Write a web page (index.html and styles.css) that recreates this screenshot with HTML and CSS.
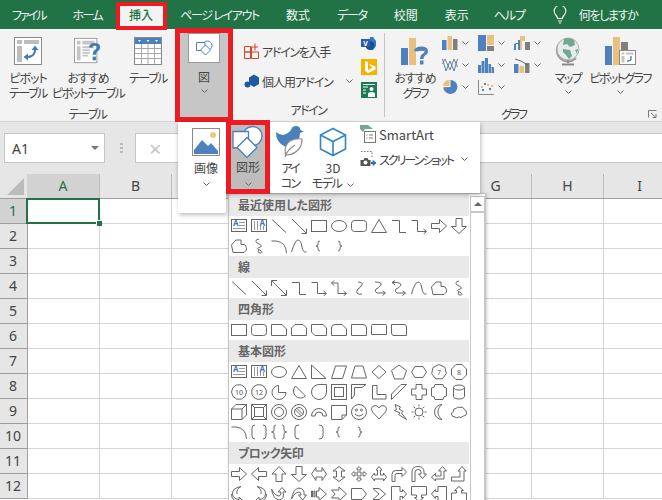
FILE: index.html
```html
<!DOCTYPE html>
<html lang="ja">
<head>
<meta charset="utf-8">
<title>Excel 挿入 図形</title>
<link rel="stylesheet" href="styles.css">
</head>
<body>
<svg class="defs" aria-hidden="true">
<defs>
<symbol id="chev" viewBox="0 0 7 4"><path d="M.5 .5L3.500 3.500 6.500 .5" fill="none" stroke="#666"/></symbol>
<symbol id="tb" viewBox="0 0 16 16"><rect x=".5" y="1.500" width="15" height="12"/><text x="2" y="8" class="ta">A</text><path d="M8 4.500h6M8 7.500h6M2 10.500h12" stroke="#999"/></symbol>
<symbol id="vt" viewBox="0 0 16 16"><rect x=".5" y="1.500" width="15" height="12"/><path d="M3.500 3v9M6.500 3v9M9.500 8v4M12.500 8v4" stroke="#999"/><text x="8.500" y="8" class="ta">A</text></symbol>
<symbol id="ln" viewBox="0 0 16 16"><path d="M1 1.500L15 14.500"/></symbol>
<symbol id="ar" viewBox="0 0 16 16"><path d="M1 1L15 15M10.500 15.500H15.500V10.500"/></symbol>
<symbol id="r" viewBox="0 0 16 16"><rect x=".5" y="2.500" width="15" height="11"/></symbol>
<symbol id="ov" viewBox="0 0 16 16"><ellipse cx="8" cy="8" rx="7.500" ry="5.500"/></symbol>
<symbol id="rr" viewBox="0 0 16 16"><rect x=".5" y="2.500" width="15" height="11" rx="3"/></symbol>
<symbol id="tri" viewBox="0 0 16 16"><path d="M8 1.500L15.500 14.500H.5z"/></symbol>
<symbol id="el" viewBox="0 0 16 16"><path d="M1 2.500H8.500V14.500H15"/></symbol>
<symbol id="ea" viewBox="0 0 16 16"><path d="M.5 2.500H6.500V13.500H15M12.500 11l3 2.500-3 2.500"/></symbol>
<symbol id="bra" viewBox="0 0 16 16"><path d="M.5 5.500H8.500V1.500L15.500 8 8.500 14.500V10.500H.5z"/></symbol>
<symbol id="bla" viewBox="0 0 16 16"><path d="M15.500 5.500H7.500V1.500L.5 8 7.500 14.500V10.500H15.500z"/></symbol>
<symbol id="bua" viewBox="0 0 16 16"><path d="M8 .5L15 8H11V15.500H5V8H1z"/></symbol>
<symbol id="bda" viewBox="0 0 16 16"><path d="M5 .5H11V8.500H15.500L8 15.500 .5 8.500H5z"/></symbol>
<symbol id="ff" viewBox="0 0 16 16"><path d="M2 14.500L.5 7 5 2H10V6.500H13Q15.500 7 15.500 12L13 14.500z"/></symbol>
<symbol id="sc" viewBox="0 0 16 16"><path d="M8 1Q3 2 6 5Q13 8 9 9Q4 11 9 12Q13 15 9 15Q6 15 8 12"/></symbol>
<symbol id="cv" viewBox="0 0 16 16"><path d="M.5 3H5Q15 4 15.500 15"/></symbol>
<symbol id="cs" viewBox="0 0 16 16"><path d="M.5 14Q4 2 7 2Q10 2 11 9Q12 15 15.500 14"/></symbol>
<symbol id="lb" viewBox="0 0 16 16"><path d="M9 3Q7 3 7 5V7Q7 8 5 8Q7 8 7 10V11Q7 13 9 13"/></symbol>
<symbol id="rb" viewBox="0 0 16 16"><path d="M7 3Q9 3 9 5V7Q9 8 11 8Q9 8 9 10V11Q9 13 7 13"/></symbol>
<symbol id="da" viewBox="0 0 16 16"><path d="M1 1L15 15M.5 6V.5H6M10 15.500H15.500V10"/></symbol>
<symbol id="ed" viewBox="0 0 16 16"><path d="M3 .5L.5 3 3 5.500M.5 3H7V13.500H15M12.500 11l3 2.500-3 2.500"/></symbol>
<symbol id="cc" viewBox="0 0 16 16"><path d="M7 2Q12 2 11 5Q9 8 7 9Q5 12 6 13Q8 15 11 14"/></symbol>
<symbol id="ca" viewBox="0 0 16 16"><path d="M4 2Q11 2 10 5Q8 8 5 9Q3 12 6 13H14M11.500 11l3 2-3 2.500"/></symbol>
<symbol id="cd" viewBox="0 0 16 16"><path d="M4 .5L1 2.500 4 5M1 2.500Q10 2 10 5Q8 8 5 9Q3 12 6 13H14M11.500 11l3 2-3 2.500"/></symbol>
<symbol id="s1" viewBox="0 0 16 16"><path d="M.5 2.500H11L15.500 7V13.500H.5z"/></symbol>
<symbol id="s2" viewBox="0 0 16 16"><path d="M4 2.500H12L15.500 6V13.500H.5V6z"/></symbol>
<symbol id="s3" viewBox="0 0 16 16"><path d="M.5 2.500H12L15.500 6V13.500H4L.5 10z"/></symbol>
<symbol id="s4" viewBox="0 0 16 16"><path d="M.5 13.500V6Q.5 2.500 4 2.500H11L15.500 7V13.500z"/></symbol>
<symbol id="r1" viewBox="0 0 16 16"><path d="M.5 2.500H12Q15.500 2.500 15.500 6V13.500H.5z"/></symbol>
<symbol id="r2" viewBox="0 0 16 16"><path d="M.5 12.500V3.500Q.5 2.500 2 2.500H14Q15.500 2.500 15.500 3.500V12.500z"/></symbol>
<symbol id="r3" viewBox="0 0 16 16"><path d="M.5 2.500H13Q15.500 2.500 15.500 5V13.500H3Q.5 13.500 .5 11z"/></symbol>
<symbol id="rt" viewBox="0 0 16 16"><path d="M.5 1V14.500H15z"/></symbol>
<symbol id="pg" viewBox="0 0 16 16"><path d="M.5 14.500L4.500 2H15.500L11.500 14.500z"/></symbol>
<symbol id="tz" viewBox="0 0 16 16"><path d="M4 2H12L15.500 14H.5z"/></symbol>
<symbol id="di" viewBox="0 0 16 16"><path d="M8 1.500L15 8 8 14.500 1 8z"/></symbol>
<symbol id="pe" viewBox="0 0 16 16"><path d="M8 1L15.500 6.500 12.500 15H3.500L.5 6.500z"/></symbol>
<symbol id="hx" viewBox="0 0 16 16"><path d="M4 2.500H12L15.500 8 12 13.500H4L.5 8z"/></symbol>
<symbol id="h7" viewBox="0 0 16 16"><path d="M8 .5L13.900 3.300 15.300 9.700 11.300 14.800H4.700L.7 9.700 2.100 3.300z"/><text x="8" y="11" class="tn">7</text></symbol>
<symbol id="o8" viewBox="0 0 16 16"><path d="M5 .5H11L15.500 5V11L11 15.500H5L.5 11V5z"/><text x="8" y="11" class="tn">8</text></symbol>
<symbol id="d10" viewBox="0 0 16 16"><path d="M5.700 .9H10.300L14.100 3.600 15.500 8 14.100 12.400 10.300 15.100H5.700L1.900 12.400 .5 8 1.900 3.600z"/><text x="8" y="10.500" class="tn">10</text></symbol>
<symbol id="d12" viewBox="0 0 16 16"><path d="M6 .8H10L13.300 2.700 15.200 6V10L13.300 13.300 10 15.200H6L2.700 13.300 .8 10V6L2.700 2.700z"/><text x="8" y="10.500" class="tn">12</text></symbol>
<symbol id="pie" viewBox="0 0 16 16"><path d="M7.500 1.500A7 7 0 1 0 15 8.500H7.500z"/></symbol>
<symbol id="ch" viewBox="0 0 16 16"><path d="M4.500 2L14.500 12A7 7 0 1 1 4.500 2z"/></symbol>
<symbol id="td" viewBox="0 0 16 16"><path d="M15.500 .5V8A7.500 7.500 0 1 1 8 .5z"/></symbol>
<symbol id="fr" viewBox="0 0 16 16"><rect x=".5" y=".5" width="15" height="15"/><rect x="3.500" y="3.500" width="9" height="9"/></symbol>
<symbol id="hf" viewBox="0 0 16 16"><path d="M.5 .5H15L11 3.500H3.500V11L.5 15z"/></symbol>
<symbol id="ls" viewBox="0 0 16 16"><path d="M1.500 1.500H6V10.500H15V15H1.500z"/></symbol>
<symbol id="ds" viewBox="0 0 16 16"><path d="M.5 10L10 .5H15.500L.5 15.500z"/></symbol>
<symbol id="pl" viewBox="0 0 16 16"><path d="M5 .5H11V5H15.500V11H11V15.500H5V11H.5V5H5z"/></symbol>
<symbol id="pq" viewBox="0 0 16 16"><path d="M4 .5H12Q12 4 15.500 4V12Q12 12 12 15.500H4Q4 12 .5 12V4Q4 4 4 .5z"/></symbol>
<symbol id="can" viewBox="0 0 16 16"><path d="M2.500 3.500A5.500 2.500 0 0 1 13.500 3.500V12.500A5.500 2.500 0 0 1 2.500 12.500zM2.500 3.500A5.500 2.500 0 0 0 13.500 3.500"/></symbol>
<symbol id="cu" viewBox="0 0 16 16"><path d="M.5 5L5 .5H15.500V11L11 15.500H.5zM.5 5H11V15.500M11 5L15.500 .5"/></symbol>
<symbol id="bv" viewBox="0 0 16 16"><rect x=".5" y=".5" width="15" height="15"/><rect x="3.500" y="3.500" width="9" height="9"/><path d="M.5 .5l3 3M15.500 .5l-3 3M.5 15.500l3-3M15.500 15.500l-3-3"/></symbol>
<symbol id="dn" viewBox="0 0 16 16"><circle cx="8" cy="8" r="7.500"/><circle cx="8" cy="8" r="4.500"/></symbol>
<symbol id="no" viewBox="0 0 16 16"><circle cx="8" cy="8" r="7.500"/><circle cx="8" cy="8" r="4.500"/><path d="M4 5.500L10.500 12M5.500 4L12 10.500"/></symbol>
<symbol id="ba" viewBox="0 0 16 16"><path d="M.5 12A7.500 7.500 0 0 1 15.500 12H12A4 4 0 0 0 4 12z"/></symbol>
<symbol id="fc" viewBox="0 0 16 16"><path d="M.5 1.500H15.500V11L11 15.500H.5zM15.500 11H11V15.500"/></symbol>
<symbol id="sm" viewBox="0 0 16 16"><circle cx="8" cy="8" r="7.500"/><circle cx="5.500" cy="6" r="1"/><circle cx="10.500" cy="6" r="1"/><path d="M4 10Q8 14 12 10"/></symbol>
<symbol id="ht" viewBox="0 0 16 16"><path d="M8 15L1.500 8Q-1 3.500 3 1.800Q6.500 .8 8 4Q9.500 .8 13 1.800Q17 3.500 14.500 8z"/></symbol>
<symbol id="lt" viewBox="0 0 16 16"><path d="M4 .5L9.500 3 8 5 12 7.500 10.500 9 15.500 15.500 7.500 10.500 9 9 3.500 6.500 5.500 5.500z"/></symbol>
<symbol id="sun" viewBox="0 0 16 16"><circle cx="8" cy="8" r="4"/><path d="M8 .5v2M8 13.500v2M.5 8h2M13.500 8h2M2.700 2.700l1.500 1.500M11.800 11.800l1.500 1.500M2.700 13.300l1.500-1.500M11.800 4.200l1.500-1.500"/></symbol>
<symbol id="mn" viewBox="0 0 16 16"><path d="M11 .5A7.500 7.500 0 1 0 11 15.500A9 9 0 0 1 11 .5z"/></symbol>
<symbol id="cl" viewBox="0 0 16 16"><path d="M4 13Q.5 13 .5 10Q.5 8 2.500 7.500Q2 4 5 4.500Q6.500 2 9 3.500Q12 2 13 5Q15.500 6 15.500 9Q15.500 12 12.500 12Q10 14.500 7.500 13Q5.500 14.500 4 13z"/></symbol>
<symbol id="db" viewBox="0 0 16 16"><path d="M4 1Q1 1 1 4V12Q1 15 4 15M12 1Q15 1 15 4V12Q15 15 12 15"/></symbol>
<symbol id="dbr" viewBox="0 0 16 16"><path d="M5 1Q3 1 3 3V6Q3 8 .5 8Q3 8 3 10V13Q3 15 5 15M11 1Q13 1 13 3V6Q13 8 15.500 8Q13 8 13 10V13Q13 15 11 15"/></symbol>
<symbol id="lk" viewBox="0 0 16 16"><path d="M8 1Q4 1 4 4V12Q4 15 8 15"/></symbol>
<symbol id="rk" viewBox="0 0 16 16"><path d="M8 1Q12 1 12 4V12Q12 15 8 15"/></symbol>
<symbol id="lra" viewBox="0 0 16 16"><path d="M.5 8L5 1.500V5H11V1.500L15.500 8 11 14.500V11H5V14.500z"/></symbol>
<symbol id="uda" viewBox="0 0 16 16"><path d="M8 .5L14 5H10.500V11H14L8 15.500 2 11H5.500V5H2z"/></symbol>
<symbol id="qd" viewBox="0 0 16 16"><path d="M8 .5L10.500 3H9V7H13V5.500L15.500 8 13 10.500V9H9V13H10.500L8 15.500 5.500 13H7V9H3V10.500L.5 8 3 5.500V7H7V3H5.500z"/></symbol>
<symbol id="lru" viewBox="0 0 16 16"><path d="M8 .5L11 4H9.500V9H12.500V7L15.500 11 12.500 15V13H3.500V15L.5 11 3.500 7V9H6.500V4H5z"/></symbol>
<symbol id="bn" viewBox="0 0 16 16"><path d="M1 15.500V8Q1 4.500 5 4.500H11V1.500L15.500 6 11 10.500V7.500H6Q4 7.500 4 9.500V15.500z"/></symbol>
<symbol id="ut" viewBox="0 0 16 16"><path d="M1 15.500V6Q1 .5 7 .5Q13 .5 13 6V8H15.500L11.500 12.500 7.500 8H10V6Q10 3.500 7 3.500Q4 3.500 4 6V15.500z"/></symbol>
<symbol id="lu" viewBox="0 0 16 16"><path d="M.5 11L4.500 7.500V10H10V5H7.500L11.500 .5 15.500 5H13V13H4.500V15z"/></symbol>
<symbol id="bu" viewBox="0 0 16 16"><path d="M.5 11H9V5H7L11 .5 15 5H13V15H.5z"/></symbol>
<symbol id="k1" viewBox="0 0 16 16"><path d="M10 .5Q1 2 1.500 8Q2 13 8 13.500V11L11.500 14.500 8 15.500Q.5 15 .5 8M10 .5Q5 3 6 8"/></symbol>
<symbol id="k2" viewBox="0 0 16 16"><path d="M6 .5Q15 2 14.500 8Q14 13 8 13.500V11L4.500 14.500 8 15.500Q15.500 15 15.500 8M6 .5Q11 3 10 8"/></symbol>
<symbol id="k3" viewBox="0 0 16 16"><path d="M.5 3Q2 13 8 14Q14 13 12 6H15L11 1.500 7 6H10Q10 10 8 10Q4 10 .5 3z"/></symbol>
<symbol id="k4" viewBox="0 0 16 16"><path d="M.5 13Q2 3 8 2Q14 3 13 9H15.500L11.500 14 7.500 9H10Q10 6 8 6Q4 6 .5 13z"/></symbol>
<symbol id="st" viewBox="0 0 16 16"><path d="M.5 5H1.500V11H.5zM3 5H4V11H3zM5.500 5H8V1.500L15.500 8 8 14.500V11H5.500z"/></symbol>
<symbol id="nt" viewBox="0 0 16 16"><path d="M.5 4H8V1L15.500 8 8 15V12H.5L4 8z"/></symbol>
<symbol id="hp" viewBox="0 0 16 16"><path d="M.5 2.500H11L15.500 8 11 13.500H.5z"/></symbol>
<symbol id="cn" viewBox="0 0 16 16"><path d="M2 2.500H8L14.500 8 8 13.500H2L8 8z"/></symbol>
<symbol id="c1" viewBox="0 0 16 16"><path d="M.5 .5H9V5.500H11.500V3.500L15.500 8 11.500 12.500V10.500H9V15.500H.5z"/></symbol>
<symbol id="c2" viewBox="0 0 16 16"><path d="M.5 .5H15.500V9H10.500V11.500H12.500L8 15.500 3.500 11.500H5.500V9H.5z"/></symbol>
<symbol id="c3" viewBox="0 0 16 16"><path d="M15.500 .5H7V5.500H4.500V3.500L.5 8 4.500 12.500V10.500H7V15.500H15.500z"/></symbol>
<symbol id="c4" viewBox="0 0 16 16"><path d="M8 .5L12.500 4.500H10.500V7H15.500V15.500H.5V7H5.500V4.500H3.500z"/></symbol>
</defs>
</svg>

<nav class="tabs">
  <span class="tab tab-first"><span class="k20">ファイル</span></span>
  <span class="tab"><span class="k16">ホーム</span></span>
  <span class="tab tab-on">挿入</span>
  <span class="tab"><span class="k13">ページ レイアウト</span></span>
  <span class="tab">数式</span>
  <span class="tab"><span class="k13">データ</span></span>
  <span class="tab">校閲</span>
  <span class="tab">表示</span>
  <span class="tab tab-help"><span class="k10">ヘルプ</span></span>
  <span class="tab tell">
    <svg class="bulb" viewBox="0 0 14 18"><path d="M4.500 12.500Q4.500 10.500 2.800 9A5.800 5.800 0 1 1 11.200 9Q9.500 10.500 9.500 12.500zM5 15h4M6 17h2" fill="none" stroke="#fff" stroke-width="1.100"/></svg>
    <span class="k13">何をしますか</span>
  </span>
</nav>

<section class="ribbon">
  <div class="group g-table">
    <div class="g-body">
      <div class="big w-pivot">
        <svg class="ic28" viewBox="0 0 28 28"><rect x=".5" y=".5" width="27" height="27" fill="#fff" stroke="#8a8a8a"/><path d="M3 3h5v4H3zM10 3h15v4H10zM3 9h5v16H3z" fill="#bdbdbd"/><path d="M21 11v3Q20 20 13 20" fill="none" stroke="#3f7cb8" stroke-width="2"/><path d="M17.500 13L21 8.500 24.500 13zM14 16.500L9.500 20 14 23.500z" fill="#3f7cb8"/></svg>
        <span class="lb"><span class="k10">ピボット</span><br><span class="k15">テーブル</span></span>
      </div>
      <div class="big w-rec">
        <svg class="ic28" viewBox="0 0 30 28"><rect x=".5" y=".5" width="24" height="26" fill="#fff" stroke="#9a9a9a"/><path d="M3 3h4v4H3zM9 3h13v4H9zM3 9h4v15H3z" fill="#c4c4c4"/><path d="M9 10h12M9 13h8M9 16h8M9 19h6" stroke="#c4c4c4" stroke-width="2"/><path d="M16 10Q17 5.500 22 5.500Q28 5.500 28 10Q28 13 25 14.500Q23.500 15.500 23.500 18H20Q20 14 23 12.500Q24.500 11.500 24.500 10Q24.500 8.500 22 8.500Q20 8.500 19.500 10.500z" fill="#3f7cb8"/><rect x="20" y="20" width="3.500" height="4" fill="#3f7cb8"/></svg>
        <span class="lb"><span class="k10">おすすめ</span><br><span class="k16">ピボットテーブル</span></span>
      </div>
      <div class="big w-tbl">
        <svg class="ic28" viewBox="0 0 28 28"><rect x=".5" y=".5" width="27" height="27" fill="#fff" stroke="#8a8a8a"/><rect x="1" y="1" width="26" height="6" fill="#4a80bc"/><path d="M1 11.500h26M1 16.500h26M1 21.500h26M7.500 7v20M14 7v20M20.500 7v20" stroke="#a8a8a8"/><path d="M4 3h3l-1.500 2zM12.500 3h3L14 5zM21 3h3l-1.500 2z" fill="#fff"/></svg>
        <span class="lb k15">テーブル</span>
      </div>
    </div>
    <div class="g-name k15">テーブル</div>
  </div>

  <div class="pic-btn">
    <span class="pic-box">
      <svg class="ic17" viewBox="0 0 17 16"><circle cx="11.500" cy="5.500" r="4.500" fill="#fff" stroke="#4a80bc"/><path d="M.5 2.500H9V10.500H.5z" fill="#fff" stroke="#4a80bc"/><path d="M9.500 5L14.500 10 9.500 15 4.500 10z" fill="#fff" stroke="#4a80bc"/></svg>
    </span>
    <span class="lb pic-lb">図</span>
    <svg class="chev"><use href="#chev"/></svg>
  </div>

  <div class="group g-add">
    <div class="g-body add-body">
      <div class="add-list">
        <div class="add-row">
          <svg class="ic16" viewBox="0 0 16 16"><path d="M.5 3.500h6v5.500h-6zM.5 9h6v6.500h-6zM7.500 9h7v6.500h-7zM7.500 3.500v5.500M11 .5v7M8 4h6" fill="none" stroke="#d24726"/></svg>
          <span class="k13">アドインを入手</span>
        </div>
        <div class="add-row add-row2">
          <svg class="ic16" viewBox="0 0 16 16"><path d="M5 4.500L10 1.500 15 4.500V11L10 14 5 11z" fill="#1e5aa0"/><circle cx="3.500" cy="11.500" r="3" fill="#1e5aa0"/></svg>
          <span class="k10">個人用アドイン</span>
          <svg class="chev add-chev"><use href="#chev"/></svg>
        </div>
      </div>
      <div class="add-icons">
        <svg class="ic16" viewBox="0 0 16 16"><path d="M9 1h3l3 4v5l-3 4H9z" fill="#2b7cd3"/><path d="M9 14a4.500 4.500 0 1 1 0-9 4.500 4.500 0 0 1 0 9z" fill="#1b4f94"/><rect x="0" y="3" width="9" height="8" fill="#2a5ca8"/><text x="4.500" y="9.500" class="tv">V</text></svg>
        <svg class="ic16" viewBox="0 0 16 16"><rect width="16" height="16" fill="#f7b200"/><path d="M4 2l3 1v8l5-2.500-2.500-1.200-1-2.300 6 2.500v3L7 14l-3-2z" fill="#fff"/></svg>
        <svg class="ic16" viewBox="0 0 16 16"><rect width="16" height="16" fill="#1d7a56"/><path d="M2 2.500h12M2 5h5M2 8h3M2 11h3" stroke="#fff"/><circle cx="10.500" cy="7" r="2" fill="#fff"/><path d="M7 15v-3q0-2 3.500-2t3.500 2v3z" fill="#fff"/></svg>
      </div>
    </div>
    <div class="g-name k15">アドイン</div>
  </div>

  <div class="group g-chart">
    <div class="g-body chart-body">
      <div class="big w-recg">
        <svg class="ic28" viewBox="0 0 28 28"><rect x="0" y="11" width="7" height="17" fill="#4e81bd"/><rect x="8" y="1" width="7" height="27" fill="#e9c17f"/><rect x="16" y="11" width="7" height="3" fill="#7f7f7f"/><path d="M13 14Q14 9.500 20 9.500Q27 9.500 27 14Q27 17 24 18.500Q22.500 19.500 22.500 22H19Q19 18 22 16.500Q23.500 15.500 23.500 14Q23.500 12.500 20 12.500Q17.500 12.500 17 14.500z" fill="#4e81bd"/><rect x="19" y="23.500" width="3.500" height="4" fill="#4e81bd"/></svg>
        <span class="lb"><span class="k10">おすすめ</span><br><span class="k23">グラフ</span></span>
      </div>
      <div class="mini-grid">
        <span class="mini"><svg class="ic16" viewBox="0 0 16 16"><path d="M0 5h4.500v10H0z" fill="#4e81bd"/><path d="M5.500 1H10v14H5.500z" fill="#e9c17f"/><path d="M11 4h4.500v11H11z" fill="#7f7f7f"/></svg><svg class="chev"><use href="#chev"/></svg></span>
        <span class="mini"><svg class="ic16" viewBox="0 0 16 16"><path d="M0 0h8v16H0z" fill="#4e81bd"/><path d="M9 0h7v10H9z" fill="#e9c17f"/><path d="M9 11h7v5H9z" fill="#7f7f7f"/></svg><svg class="chev"><use href="#chev"/></svg></span>
        <span class="mini"><svg class="ic16" viewBox="0 0 16 16"><path d="M0 9h2v6H0zM0 9h4V5h2v10H4V8H2" fill="#4e81bd"/><path d="M6 1h5v5H8v9H6z" fill="#e9c17f"/><path d="M11 7h5v8h-5z" fill="#7f7f7f"/></svg><svg class="chev"><use href="#chev"/></svg></span>
        <span class="mini"><svg class="ic16" viewBox="0 0 16 16"><path d="M.5 2L4 14 8 4l4 10 3.500-12" fill="none" stroke="#4e81bd"/><path d="M.5 7L3 2l5 11 4-11 3.500 8" fill="none" stroke="#7f7f7f"/></svg><svg class="chev"><use href="#chev"/></svg></span>
        <span class="mini"><svg class="ic16" viewBox="0 0 16 16"><path d="M0 8h3v8H0zM3.500 4h3v12h-3zM7 1h3v15H7zM10.500 7h2.500v9h-2.500zM13.500 10H16v6h-2.500z" fill="#4e81bd"/></svg><svg class="chev"><use href="#chev"/></svg></span>
        <span class="mini"><svg class="ic16" viewBox="0 0 16 16"><path d="M0 7h4.500v9H0z" fill="#4e81bd"/><path d="M5.500 9H10v7H5.500z" fill="#e9c17f"/><path d="M11 6h4.500v10H11z" fill="#7f7f7f"/><path d="M1 2l6 2 7 4" fill="none" stroke="#666"/></svg><svg class="chev"><use href="#chev"/></svg></span>
        <span class="mini"><svg class="ic16" viewBox="0 0 16 16"><path d="M8.500 1a7 7 0 1 1-7 7.500l7-.5z" fill="#4e81bd"/><path d="M7.500 .8A7 7 0 0 0 1 7h6.500z" fill="#e9c17f"/><path d="M1.300 8.500H7l-4 4q-1.500-2-1.700-4z" fill="#7f7f7f"/></svg><svg class="chev"><use href="#chev"/></svg></span>
        <span class="mini"><svg class="ic16" viewBox="0 0 16 16"><path d="M.5 1v14.500H16" fill="none" stroke="#8a8a8a"/><path d="M3 7h2v2H3zM9 5h2v2H9zM13 6h2v2h-2z" fill="#e9c17f"/><path d="M6 4h2v2H6zM4 10h2v2H4zM11 9h2v2h-2z" fill="#4e81bd"/></svg><svg class="chev"><use href="#chev"/></svg></span>
      </div>
      <div class="big w-map">
        <svg class="ic-globe" viewBox="0 0 26 30"><path d="M21 22A11 11 0 0 1 5 6.500" fill="none" stroke="#9c9c9c" stroke-width="2"/><circle cx="13" cy="13" r="11" fill="#e6ecec" stroke="#b0b0b0"/><path d="M9 3q6-2 10 1l1 5-5 2-3-3-4 1zM8 13l7 1 2 6-3 3-3-4-3-3zM20 14l3-1-1 5z" fill="#6fa98f"/><path d="M13 24v3M7 28.500h12" stroke="#8a8a8a" stroke-width="2"/></svg>
        <span class="lb k16">マップ</span>
        <svg class="chev big-chev"><use href="#chev"/></svg>
      </div>
      <div class="big w-pch">
        <svg class="ic-pch" viewBox="0 0 31 28"><rect x="0" y="9" width="7" height="19" fill="#4e81bd"/><rect x="8" y="0" width="7" height="28" fill="#e9c17f"/><rect x="16" y="5" width="7" height="8" fill="#7f7f7f"/><rect x="14.500" y="13.500" width="16" height="14" fill="#fff" stroke="#8a8a8a"/><path d="M16.500 15.500h3v2h-3zM21 15.500h7.500v2H21zM16.500 19h3v6.500h-3z" fill="#c4c4c4"/><path d="M26 19v3q0 2-4 2" fill="none" stroke="#3f7cb8" stroke-width="1.300"/></svg>
        <span class="lb k16">ピボットグラフ</span>
        <svg class="chev big-chev"><use href="#chev"/></svg>
      </div>
    </div>
    <div class="g-name g-name-chart k23">グラフ</div>
    <svg class="launcher" viewBox="0 0 9 8"><path d="M.5 7.500V.5h8M3 3l4.500 4M4.500 7.500h3.500V4" fill="none" stroke="#777"/></svg>
  </div>
</section>

<div class="fbar">
  <div class="namebox"><span>A1</span><i class="tri-down"></i></div>
  <span class="dots"></span>
  <div class="formula"><span class="cancel">×</span></div>
</div>

<main class="sheet">
  <div class="head">
    <div class="corner"><i></i></div>
    <div class="col col-on">A</div><div class="col">B</div><div class="col">C</div><div class="col">D</div><div class="col">E</div><div class="col">F</div><div class="col">G</div><div class="col">H</div><div class="col">I</div>
  </div>
  <div class="body">
    <div class="rows">
      <div class="row row-on">1</div><div class="row">2</div><div class="row">3</div><div class="row">4</div><div class="row">5</div><div class="row">6</div><div class="row">7</div><div class="row">8</div><div class="row">9</div><div class="row">10</div><div class="row">11</div><div class="row">12</div>
    </div>
    <div class="cells"><div class="sel"><i></i></div></div>
  </div>
</main>

<div class="popup">
  <div class="pop-img">
    <svg class="ic-img" viewBox="0 0 28 28"><rect x=".5" y=".5" width="27" height="27" fill="#fff" stroke="#8a8a8a"/><circle cx="21" cy="7" r="3" fill="#f0c77f"/><path d="M2 26V22L10 12l6 6 3-3 7 8v3z" fill="#4e81bd"/></svg>
    <span class="lb">画像</span>
    <svg class="chev"><use href="#chev"/></svg>
  </div>
  <div class="pop-shape">
    <svg class="ic-shape" viewBox="0 0 32 33"><circle cx="20.500" cy="11" r="9.500" fill="#fff" stroke="#4a80bc" stroke-width="1.300"/><path d="M1 6.500H16.500V23H1z" fill="#fff" stroke="#4a80bc" stroke-width="1.300"/><path d="M15 12.500L25 22.500 15 32.500 5 22.500z" fill="#fff" stroke="#4a80bc" stroke-width="1.300"/></svg>
    <span class="lb">図形</span>
    <svg class="chev"><use href="#chev"/></svg>
  </div>
  <div class="pop-icon">
    <svg class="ic-bird" viewBox="0 0 28 31"><path d="M0 6Q4 9 7 9Q12 8 15 4Q16 0 20 0Q24 0 24.500 4L28 5.500 24 7Q24 15 17 18Q13 23 8 20Q0 16 0 6z" fill="#4a80bc"/><path d="M10 29Q7 20 14 15Q20 12 26 13Q26 20 22 24Q17 29 10 29zM9 31Q11 24 19 19" fill="#fff" stroke="#8a8a8a" stroke-width="1.200"/></svg>
    <span class="lb k20">アイ<br>コン</span>
  </div>
  <div class="pop-3d">
    <svg class="ic-cube" viewBox="0 0 28 30"><path d="M14 1.500L26.500 8V22L14 28.500 1.500 22V8zM1.500 8L14 14.500 26.500 8M14 14.500V28.500" fill="none" stroke="#2e86c8" stroke-width="1.600"/></svg>
    <span class="lb lb-3d">3D<br><span class="k13">モデル</span> <svg class="chev"><use href="#chev"/></svg></span>
  </div>
  <div class="pop-side">
    <div class="side-row">
      <svg class="ic-sa" viewBox="0 0 16 18"><path d="M0 0h8l5 4H5l-2 3L0 4z" fill="#6fa98f"/><rect x="4.500" y="6.500" width="11" height="11" fill="#fff" stroke="#777"/><path d="M6.500 10h1M9 10h4M6.500 13h1M9 13h4" stroke="#777"/></svg>
      <span class="sa">SmartArt</span>
    </div>
    <div class="side-row side-row2">
      <svg class="ic-sa" viewBox="0 0 16 16"><path d="M1 .5h11v6" fill="none" stroke="#777" stroke-dasharray="1.500 1.500"/><path d="M.5 9h3l1-2h3l1 2h2v6h-10z" fill="#555"/><circle cx="5.500" cy="11.500" r="2" fill="#fff"/><path d="M11 12h5M13.500 9.500v5" stroke="#2e6fb5" stroke-width="2"/></svg>
      <span class="k20">スクリーンショット</span>
      <svg class="chev side-chev"><use href="#chev"/></svg>
    </div>
  </div>
</div>

<div class="gallery">
  <div class="list">
    <h4>最近使用した図形</h4>
    <div class="shapes">
      <svg><use href="#tb"/></svg><svg><use href="#vt"/></svg><svg><use href="#ln"/></svg><svg><use href="#ar"/></svg><svg><use href="#r"/></svg><svg><use href="#ov"/></svg><svg><use href="#rr"/></svg><svg><use href="#tri"/></svg><svg><use href="#el"/></svg><svg><use href="#ea"/></svg><svg><use href="#bra"/></svg><svg><use href="#bda"/></svg>
      <svg><use href="#ff"/></svg><svg><use href="#sc"/></svg><svg><use href="#cv"/></svg><svg><use href="#cs"/></svg><svg><use href="#lb"/></svg><svg><use href="#rb"/></svg>
    </div>
    <h4>線</h4>
    <div class="shapes">
      <svg><use href="#ln"/></svg><svg><use href="#ar"/></svg><svg><use href="#da"/></svg><svg><use href="#el"/></svg><svg><use href="#ea"/></svg><svg><use href="#ed"/></svg><svg><use href="#cc"/></svg><svg><use href="#ca"/></svg><svg><use href="#cd"/></svg><svg><use href="#cs"/></svg><svg><use href="#ff"/></svg><svg><use href="#sc"/></svg>
    </div>
    <h4>四角形</h4>
    <div class="shapes">
      <svg><use href="#r"/></svg><svg><use href="#rr"/></svg><svg><use href="#s1"/></svg><svg><use href="#s2"/></svg><svg><use href="#s3"/></svg><svg><use href="#s4"/></svg><svg><use href="#r1"/></svg><svg><use href="#r2"/></svg><svg><use href="#r3"/></svg>
    </div>
    <h4>基本図形</h4>
    <div class="shapes">
      <svg><use href="#tb"/></svg><svg><use href="#vt"/></svg><svg><use href="#ov"/></svg><svg><use href="#tri"/></svg><svg><use href="#rt"/></svg><svg><use href="#pg"/></svg><svg><use href="#tz"/></svg><svg><use href="#di"/></svg><svg><use href="#pe"/></svg><svg><use href="#hx"/></svg><svg><use href="#h7"/></svg><svg><use href="#o8"/></svg>
      <svg><use href="#d10"/></svg><svg><use href="#d12"/></svg><svg><use href="#pie"/></svg><svg><use href="#ch"/></svg><svg><use href="#td"/></svg><svg><use href="#fr"/></svg><svg><use href="#hf"/></svg><svg><use href="#ls"/></svg><svg><use href="#ds"/></svg><svg><use href="#pl"/></svg><svg><use href="#pq"/></svg><svg><use href="#can"/></svg>
      <svg><use href="#cu"/></svg><svg><use href="#bv"/></svg><svg><use href="#dn"/></svg><svg><use href="#no"/></svg><svg><use href="#ba"/></svg><svg><use href="#fc"/></svg><svg><use href="#sm"/></svg><svg><use href="#ht"/></svg><svg><use href="#lt"/></svg><svg><use href="#sun"/></svg><svg><use href="#mn"/></svg><svg><use href="#cl"/></svg>
      <svg><use href="#cv"/></svg><svg><use href="#db"/></svg><svg><use href="#dbr"/></svg><svg><use href="#lk"/></svg><svg><use href="#rk"/></svg><svg><use href="#lb"/></svg><svg><use href="#rb"/></svg>
    </div>
    <h4 class="k05">ブロック矢印</h4>
    <div class="shapes">
      <svg><use href="#bra"/></svg><svg><use href="#bla"/></svg><svg><use href="#bua"/></svg><svg><use href="#bda"/></svg><svg><use href="#lra"/></svg><svg><use href="#uda"/></svg><svg><use href="#qd"/></svg><svg><use href="#lru"/></svg><svg><use href="#bn"/></svg><svg><use href="#ut"/></svg><svg><use href="#lu"/></svg><svg><use href="#bu"/></svg>
      <svg><use href="#k1"/></svg><svg><use href="#k2"/></svg><svg><use href="#k3"/></svg><svg><use href="#k4"/></svg><svg><use href="#st"/></svg><svg><use href="#nt"/></svg><svg><use href="#hp"/></svg><svg><use href="#cn"/></svg><svg><use href="#c1"/></svg><svg><use href="#c2"/></svg><svg><use href="#c3"/></svg><svg><use href="#c4"/></svg>
    </div>
  </div>
  <div class="scroll"><div class="scroll-up"><i></i></div></div>
</div>
</body>
</html>
```

FILE: styles.css
```css
* { box-sizing: border-box; }
html, body { margin: 0; padding: 0; }
body {
  width: 662px; height: 500px; overflow: hidden; position: relative;
  font: 12px/15px "Noto Sans CJK JP", "Noto Sans", sans-serif;
  font-feature-settings: "palt";
  color: #444; background: #fff;
}
.defs { display: block; width: 0; height: 0; position: absolute; }

/* kana tracking, to match the compact UI font */
.k05 { letter-spacing: -.5px; }
.k10 { letter-spacing: -1px; }
.k13 { letter-spacing: -1.3px; }
.k15 { letter-spacing: -1.5px; }
.k16 { letter-spacing: -1.6px; }
.k20 { letter-spacing: -2px; }
.k23 { letter-spacing: -2.3px; }

/* tabs */
.tabs { display: flex; height: 29px; background: #217346; color: #f0f5f2; white-space: nowrap; }
.tab { display: flex; align-items: center; padding: 0 13.5px; flex: none; }
.tab-first { margin-left: -1.5px; }
.tab-help { margin-left: -2px; }
.tab-on { position: relative; isolation: isolate; color: #217346; font-weight: 500; }
.tab-on::before {
  content: ""; position: absolute; left: 0; right: 0; top: 2px; bottom: -1px;
  background: #f3f3f3; border: 4px solid #ed1c24; z-index: -1;
}
.tell { gap: 12px; padding-left: 14px; }
.bulb { width: 14px; height: 18px; }

/* ribbon */
.ribbon { display: flex; height: 93px; background: #f3f3f3; border-bottom: 1px solid #d4d4d4; }
.group { position: relative; display: flex; flex-direction: column; }
.g-body { display: flex; height: 77px; }
.g-name { height: 15px; text-align: center; }
.g-table { width: 175px; }
.g-table .g-body { padding-left: 3px; }
.big { display: flex; flex-direction: column; align-items: center; padding-top: 8px; flex: none; }
.lb { display: block; text-align: center; line-height: 15px; white-space: nowrap; }
.big .lb { margin-top: 5px; }
.w-pivot { width: 50px; }
.w-rec { width: 70px; }
.w-tbl { width: 50px; }
.ic28 { width: 28px; height: 28px; display: block; flex: none; }
.ic16 { width: 16px; height: 16px; display: block; flex: none; }
.ic17 { width: 17px; height: 16px; display: block; }
.chev { width: 7px; height: 4px; display: block; flex: none; }

.pic-btn {
  width: 58px; height: 94px; margin-top: -1px; flex: none;
  display: flex; flex-direction: column; align-items: center;
  background: #c6c6c6; border: 5px solid #ed1c24; position: relative;
}
.pic-box { width: 32px; height: 30px; background: #fff; border: 1px solid #9a9a9a; display: flex; align-items: center; justify-content: center; }
.pic-lb { margin-top: 6px; }
.pic-btn .chev { margin-top: 5px; }

.g-add { width: 152px; border-right: 1px solid #c6c6c6; margin: 4px 0; }
.add-body { padding-left: 11px; height: 73px; }
.add-list { display: flex; flex-direction: column; width: 117px; padding-top: 10px; }
.add-row { display: flex; align-items: center; gap: 2px; height: 16px; white-space: nowrap; }
.add-row2 { margin-top: 14px; }
.add-chev { margin-left: 11px; }
.add-icons { display: flex; flex-direction: column; gap: 7px; padding-top: 3px; }

.g-chart { flex: 1; }
.chart-body { padding-left: 10px; }
.w-recg { width: 40px; }
.mini-grid { display: grid; grid-template-columns: 36px 36px 36px; grid-auto-rows: 22px; margin-left: 7px; padding-top: 3px; width: 108px; flex: none; }
.mini { display: flex; align-items: center; gap: 4px; }
.w-map { width: 36px; }
.w-pch { width: 64px; margin-left: 2px; }
.ic-globe { width: 26px; height: 30px; display: block; margin-top: -1px; flex: none; }
.ic-pch { width: 31px; height: 28px; display: block; flex: none; }
.w-map .lb { margin-top: 4px; }
.big-chev { margin-top: 5px; }
.g-name-chart { padding-right: 20px; }
.launcher { position: absolute; right: 5px; bottom: 3px; width: 9px; height: 8px; }

/* formula bar */
.fbar { display: flex; height: 41px; background: #e6e6e6; padding: 11px 0 0 4px; }
.namebox { width: 101px; height: 30px; background: #fff; border: 1px solid #c6c6c6; display: flex; align-items: center; justify-content: space-between; padding: 0 5px 0 7px; font: 14px "Noto Sans", sans-serif; color: #444; }
.tri-down { width: 0; height: 0; border: 4px solid transparent; border-top: 4px solid #777; border-bottom: 0; }
.dots { width: 3px; height: 11px; margin: 10px 12px 0 15px; background: repeating-linear-gradient(#b8b8b8 0 2px, transparent 2px 4px); }
.formula { flex: 1; height: 30px; background: #fff; border: 1px solid #c6c6c6; border-right: 0; display: flex; align-items: center; padding-left: 13px; }
.cancel { font: 22px "Noto Sans", sans-serif; color: #c6c6c6; }

/* sheet */
.sheet { background: #fff; }
.head { display: flex; height: 36px; background: #e6e6e6; border-bottom: 1px solid #9e9e9e; padding-top: 11px; }
.corner { width: 27px; position: relative; flex: none; }
.corner i { position: absolute; left: 7px; top: 4px; width: 0; height: 0; border-style: solid; border-width: 0 0 17px 17px; border-color: transparent transparent #bcbcbc transparent; }
.col { width: 72px; flex: none; text-align: center; font: 14px/24px "Noto Sans", sans-serif; color: #444; border-right: 1px solid #bdbdbd; }
.col-on { width: 73px; background: #d2d2d2; color: #217346; }
.body { display: flex; }
.rows { width: 28px; flex: none; border-right: 1px solid #9e9e9e; background: #e6e6e6; }
.row { height: 25px; text-align: center; font: 14px/23px "Noto Sans", sans-serif; border-bottom: 1px solid #9e9e9e; color: #444; padding-right: 1px; }
.row-on { background: #d2d2d2; color: #217346; }
.cells {
  flex: 1; height: 300px; position: relative;
  background-size: 72px 25px;
  background-image: linear-gradient(to right, transparent 71px, #d4d4d4 71px), linear-gradient(to bottom, transparent 24px, #d4d4d4 24px);
}
.sel { position: absolute; left: -2px; top: -1px; width: 74px; height: 26px; border: 2px solid #217346; }
.sel i { position: absolute; right: -4px; bottom: -4px; width: 6px; height: 6px; background: #217346; border: 1px solid #fff; border-width: 1px 0 0 1px; }

/* illustrations popup */
.popup {
  position: absolute; left: 178px; top: 122px; width: 302px; height: 71px;
  display: flex; background: #fff; box-shadow: 1px 2px 4px rgba(0,0,0,.25); z-index: 2;
}
.pop-img { width: 48px; height: 91px; flex: none; background: #fff; box-shadow: 1px 2px 4px rgba(0,0,0,.25); display: flex; flex-direction: column; align-items: center; padding: 6px 0 0 8px; }
.ic-img { width: 28px; height: 28px; display: block; flex: none; }
.pop-img .lb { margin-top: 4px; }
.pop-img .chev { margin-top: 7px; }
.pop-shape { width: 44px; height: 74px; margin-top: -2px; flex: none; background: #bdbdbd; border: 5px solid #ed1c24; display: flex; flex-direction: column; align-items: center; position: relative; z-index: 3; overflow: hidden; }
.ic-shape { width: 32px; height: 33px; display: block; flex: none; }
.pop-shape .lb { margin-top: 1px; }
.pop-shape .chev { margin-top: 8px; }
.pop-icon { width: 36px; flex: none; margin-left: 2px; display: flex; flex-direction: column; align-items: center; padding-top: 4px; }
.ic-bird { width: 28px; height: 31px; display: block; flex: none; }
.pop-icon .lb { margin-top: 3px; }
.pop-3d { width: 50px; flex: none; display: flex; flex-direction: column; align-items: center; padding-top: 5px; }
.ic-cube { width: 28px; height: 30px; display: block; flex: none; }
.lb-3d { margin-top: 3px; }
.lb-3d .chev { display: inline-block; vertical-align: middle; margin-left: 3px; }
.pop-side { margin-left: 2px; padding-top: 3px; display: flex; flex-direction: column; white-space: nowrap; }
.side-row { display: flex; align-items: center; gap: 3px; height: 18px; }
.side-row2 { margin-top: 7px; }
.ic-sa { width: 16px; height: 18px; display: block; flex: none; }
.side-row2 .ic-sa { height: 16px; }
.sa { font-size: 13px; }
.side-chev { margin-left: 5px; }

/* shapes gallery */
.gallery {
  position: absolute; left: 228px; top: 193px; width: 258px; height: 307px;
  display: flex; background: #fff; border: 1px solid #c6c6c6; border-bottom: 0;
  box-shadow: 1px 1px 3px rgba(0,0,0,.2); z-index: 1; overflow: hidden;
}
.list { width: 240px; flex: none; }
.list h4 { margin: 0; height: 22px; line-height: 22px; background: #e9e9e9; color: #666; font-size: 12px; font-weight: 700; padding-left: 9px; }
.shapes { display: grid; grid-template-columns: repeat(12, 16px); column-gap: 4px; grid-auto-rows: 20px; padding-left: 2px; align-items: center; }
.shapes svg { width: 16px; height: 16px; display: block; fill: none; stroke: #666; stroke-width: 1; overflow: visible; }
.ta { font: 700 8px "Noto Sans", sans-serif; fill: #4472c4; stroke: none; }
.tn { font: 7px "Noto Sans", sans-serif; fill: #555; stroke: none; text-anchor: middle; }
.tv { font: 700 7px "Noto Sans", sans-serif; fill: #fff; text-anchor: middle; }
.scroll { width: 15px; margin: 2px 0 0 1px; border: 1px solid #c6c6c6; border-bottom: 0; flex: none; }
.scroll-up { height: 16px; border-bottom: 2px solid #c6c6c6; display: flex; align-items: center; justify-content: center; }
.scroll-up i { width: 0; height: 0; border: 4px solid transparent; border-bottom: 4px solid #666; border-top: 0; }
```
